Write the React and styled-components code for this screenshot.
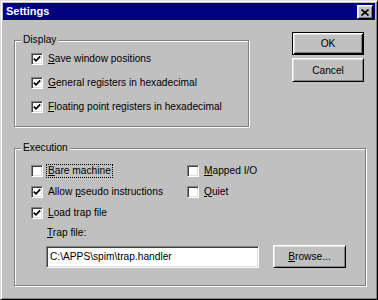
import React from "react";
import styled, { createGlobalStyle } from "styled-components";

const GlobalStyle = createGlobalStyle`
  html, body {
    margin: 0;
    padding: 0;
    background: #c0c0c0;
  }
  body {
    font-family: "Liberation Sans", Arial, sans-serif;
    font-size: 10.2px;
    color: #000;
  }
`;

const Window = styled.div`
  box-sizing: border-box;
  width: 378px;
  height: 300px;
  padding: 2px;
  background: #c0c0c0;
  border: 1px solid;
  border-color: #dfdfdf #000 #000 #dfdfdf;
  box-shadow: inset 1px 1px 0 #fff, inset -1px -1px 0 #808080;
  display: flex;
  flex-direction: column;
`;

const TitleBar = styled.div`
  height: 17px;
  background: #000080;
  color: #fff;
  display: flex;
  align-items: flex-start;
  justify-content: space-between;
  padding-left: 3px;
`;

const Title = styled.span`
  font-weight: bold;
  font-size: 11px;
  line-height: 17px;
`;

const CloseBox = styled.div`
  box-sizing: border-box;
  width: 16px;
  height: 14px;
  margin: 2px 2px 0 0;
  background: #c0c0c0;
  border: 1px solid;
  border-color: #fff #000 #000 #fff;
  box-shadow: inset 1px 1px 0 #dfdfdf, inset -1px -1px 0 #808080;
  display: flex;
  align-items: center;
  justify-content: center;
`;

const Body = styled.div`
  flex: 1;
  display: flex;
  flex-direction: column;
  padding: 12px 9px 12px 11px;
`;

const TopRow = styled.div`
  display: flex;
  align-items: flex-start;
  justify-content: space-between;
`;

const Group = styled.fieldset`
  box-sizing: border-box;
  margin: ${(p) => p.$top}px 0 0;
  padding: 0 0 ${(p) => p.$bottom}px 6px;
  width: ${(p) => (p.$width ? `${p.$width}px` : "auto")};
  min-width: 0;
  border: 1px solid #808080;
  box-shadow: inset 1px 1px 0 #fff, 1px 1px 0 #fff;
`;

const Legend = styled.legend`
  padding: 0 2px;
  line-height: 12px;
  background: #c0c0c0;
`;

const List = styled.div`
  display: flex;
  flex-direction: column;
  padding: 1px 0 0 10px;
`;

const Grid = styled.div`
  display: grid;
  grid-template-columns: 156px 1fr;
  grid-auto-rows: 21px;
  padding: 6px 0 0 10px;
`;

const Row = styled.div`
  height: ${(p) => p.$h}px;
  display: flex;
  align-items: center;
`;

const Box = styled.span`
  box-sizing: border-box;
  width: 12px;
  height: 12px;
  flex: none;
  background: #fff;
  border: 1px solid;
  border-color: #808080 #fff #fff #808080;
  box-shadow: inset 1px 1px 0 #404040, inset -1px -1px 0 #dfdfdf;
  display: flex;
  align-items: center;
  justify-content: center;
`;

const Label = styled.span`
  margin-left: ${(p) => (p.$focus ? 4 : 5)}px;
  padding: 0 ${(p) => (p.$focus ? 1 : 0)}px;
  line-height: 12px;
  outline: ${(p) => (p.$focus ? "1px dotted #000" : "none")};
  white-space: nowrap;
`;

const Key = styled.span`
  text-decoration: underline;
`;

const Buttons = styled.div`
  display: flex;
  flex-direction: column;
  gap: 3px;
  margin-right: 2px;
`;

const Button = styled.div`
  box-sizing: border-box;
  width: ${(p) => p.$w}px;
  height: ${(p) => p.$h}px;
  background: #c0c0c0;
  border: 1px solid;
  border-color: ${(p) => (p.$default ? "#000" : "#fff #000 #000 #fff")};
  box-shadow: ${(p) =>
    p.$default
      ? "inset 1px 1px 0 #fff, inset -1px -1px 0 #000, inset 2px 2px 0 #dfdfdf, inset -2px -2px 0 #808080"
      : "inset 1px 1px 0 #dfdfdf, inset -1px -1px 0 #808080"};
  display: flex;
  align-items: center;
  justify-content: center;
`;

const TrapLabel = styled.div`
  margin: 4px 0 0 26px;
  line-height: 12px;
`;

const TrapRow = styled.div`
  display: flex;
  align-items: center;
  margin: 6px 0 0 25px;
  gap: 14px;
`;

const Input = styled.div`
  box-sizing: border-box;
  width: 213px;
  height: 22px;
  padding-left: 3px;
  background: #fff;
  border: 1px solid;
  border-color: #808080 #fff #fff #808080;
  box-shadow: inset 1px 1px 0 #404040, inset -1px -1px 0 #dfdfdf;
  display: flex;
  align-items: center;
`;

const Tick = () => (
  <svg width="8" height="8" viewBox="0 0 8 8">
    <path d="M0.8 3.6 L3 5.8 L7.2 1.4" fill="none" stroke="#000" strokeWidth="1.7" />
  </svg>
);

const Check = ({ checked, focus, h, children }) => (
  <Row $h={h}>
    <Box>{checked && <Tick />}</Box>
    <Label $focus={focus}>{children}</Label>
  </Row>
);

export default function App() {
  return (
    <>
      <GlobalStyle />
      <Window>
        <TitleBar>
          <Title>Settings</Title>
          <CloseBox>
            <svg width="8" height="7" viewBox="0 0 8 7">
              <path d="M0.5 0.5 L7.5 6.5 M7.5 0.5 L0.5 6.5" stroke="#000" strokeWidth="1.6" />
            </svg>
          </CloseBox>
        </TitleBar>
        <Body>
          <TopRow>
            <Group $top={2} $bottom={7} $width={235}>
              <Legend>Display</Legend>
              <List>
                <Check checked h={24}>
                  <Key>S</Key>ave window positions
                </Check>
                <Check checked h={24}>
                  <Key>G</Key>eneral registers in hexadecimal
                </Check>
                <Check checked h={24}>
                  <Key>F</Key>loating point registers in hexadecimal
                </Check>
              </List>
            </Group>
            <Buttons>
              <Button $default $w={72} $h={23}>OK</Button>
              <Button $w={72} $h={24}>Cancel</Button>
            </Buttons>
          </TopRow>
          <Group $top={15} $bottom={17}>
            <Legend>Execution</Legend>
            <Grid>
              <Check focus h={21}>
                <Key>B</Key>are machine
              </Check>
              <Check h={21}>
                <Key>M</Key>apped I/O
              </Check>
              <Check checked h={21}>
                Allow <Key>p</Key>seudo instructions
              </Check>
              <Check h={21}>
                <Key>Q</Key>uiet
              </Check>
              <Check checked h={21}>
                <Key>L</Key>oad trap file
              </Check>
            </Grid>
            <TrapLabel>
              <Key>T</Key>rap file:
            </TrapLabel>
            <TrapRow>
              <Input>C:\APPS\spim\trap.handler</Input>
              <Button $w={73} $h={23}>
                <span>
                  <Key>B</Key>rowse...
                </span>
              </Button>
            </TrapRow>
          </Group>
        </Body>
      </Window>
    </>
  );
}
